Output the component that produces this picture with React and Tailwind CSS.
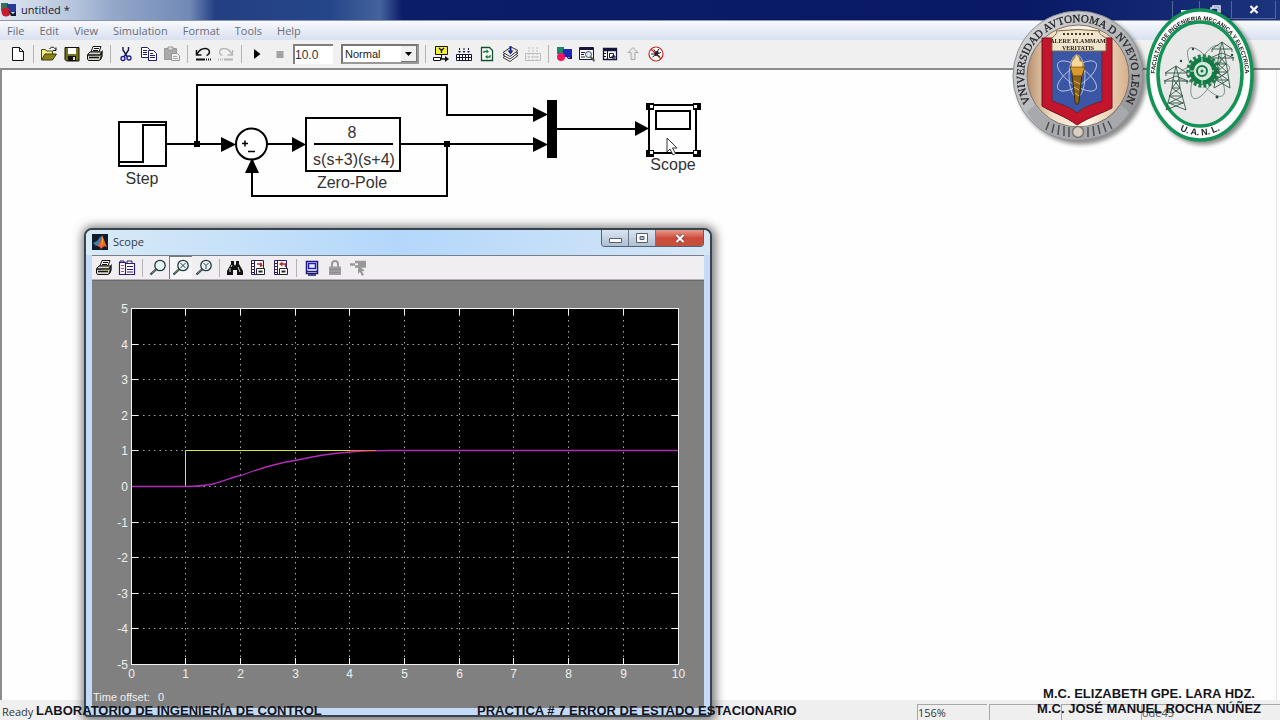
import React from "react";

const MENUS = ["File", "Edit", "View", "Simulation", "Format", "Tools", "Help"];

function Icon({ children }) {
  return (
    <svg viewBox="0 0 18 18" className="h-[18px] w-[18px] shrink-0" fill="none" aria-hidden="true">
      {children}
    </svg>
  );
}

function ToolButton({ label, pressed, children }) {
  return (
    <button
      type="button"
      aria-label={label}
      className={
        pressed
          ? "flex h-[23px] w-[23px] items-center justify-center border-t border-l border-[#777] bg-[#f7f6f8]"
          : "flex h-[23px] w-[23px] items-center justify-center"
      }
    >
      <Icon>{children}</Icon>
    </button>
  );
}

function Separator() {
  return (
    <div className="flex w-2 justify-center">
      <div className="h-[18px] w-px bg-[#b4b4b4]" />
    </div>
  );
}

const printer = (
  <>
    <path d="M5 7 7 1.500h8L13 7z" fill="#fff" stroke="#111" />
    <path d="M8 3.500h5M7 5.500h5" stroke="#111" />
    <path d="M1.500 9.500 4 7h12l-1 2.500v4.500l-2 1.500H2.500l-1-1.500z" fill="#d9d9d0" stroke="#111" />
    <path d="M2 10h12M3 12.500h10M14 10l2-3v4l-2 3.500" stroke="#111" strokeWidth="1.300" />
    <path d="M9 11.300h3" stroke="#b8b02a" />
  </>
);

const lens = (
  <>
    <circle cx="11" cy="6.500" r="5.200" fill="#e6f5f2" stroke="#223c44" strokeWidth="1.300" />
    <path d="M7.500 10 1.500 15.500" stroke="#223c44" strokeWidth="2.200" />
    <path d="M7 10.500 2.500 14.500" stroke="#a9c94a" strokeWidth="0.700" />
  </>
);

const axesNote = (
  <>
    <path d="M2.500 1.500h12v14h-12z" fill="#fff" stroke="#2a1c66" />
    <path d="M5.500 2v13M2.500 4.500h3M2.500 7.500h3M2.500 10.500h3M2.500 13.500h3" stroke="#2a1c66" />
    <path d="M7.500 9.500h8v6h-8z" fill="#fff" stroke="#222" />
    <path d="M9.500 12.500h4" stroke="#222" strokeWidth="2" />
  </>
);

function MainToolbar() {
  return (
    <div
      role="toolbar"
      aria-label="Model tools"
      className="flex h-[30px] shrink-0 items-center border-b-2 border-[#8c8c8c] bg-[#f0f0f0] pl-[6px]"
    >
      <ToolButton label="New">
        <path d="M3.500 2.500h7l4 4v9h-11z" fill="#fff" stroke="#111" />
        <path d="M10.500 2.500v4h4" stroke="#111" />
      </ToolButton>
      <Separator />
      <ToolButton label="Open">
        <path d="M1.500 14.500v-10h4l1 1.500h6v3" fill="#f4ee8b" stroke="#4b4810" />
        <path d="M1.500 15 5 9h11.500l-4 6z" fill="#8a8418" stroke="#3a380c" />
        <path d="M9.500 4c2-3 5-2 6 .5M16 2.500v3h-3" stroke="#111" />
      </ToolButton>
      <ToolButton label="Save">
        <path d="M2 2.500h14V16H3.500L2 14.500z" fill="#77701a" stroke="#111" />
        <path d="M5 3h8v6H5z" fill="#fff" />
        <path d="M5 11h8v5H5z" fill="#111" />
        <path d="M10 12h2v3h-2z" fill="#ddd" />
      </ToolButton>
      <ToolButton label="Print">{printer}</ToolButton>
      <Separator />
      <ToolButton label="Cut">
        <path d="M6 2v3l4.500 7M11.500 2v3L7 12" stroke="#15154a" strokeWidth="1.400" />
        <circle cx="6" cy="13.500" r="2" stroke="#1c1c9a" strokeWidth="1.300" />
        <circle cx="12" cy="13" r="2" stroke="#1c1c9a" strokeWidth="1.300" />
      </ToolButton>
      <ToolButton label="Copy">
        <path d="M1.500 2.500h6l2 2v8h-8z" fill="#fff" stroke="#20206a" />
        <path d="M3 5.500h4M3 7.500h4M3 9.500h4" stroke="#20206a" />
        <path d="M8.500 5.500h5l3 3v7h-8z" fill="#fff" stroke="#20206a" />
        <path d="M10 8.500h3M10 10.500h5M10 12.500h5" stroke="#20206a" />
      </ToolButton>
      <ToolButton label="Paste">
        <path d="M1.500 3.500h12v11h-12z" fill="#a9a9a9" stroke="#999" />
        <path d="M5 2h5v3H5z" fill="#ddd" stroke="#999" />
        <path d="M8.500 8.500h6l2 2v5h-8z" fill="#eee" stroke="#999" />
        <path d="M10 11.500h4M10 13.500h5" stroke="#aaa" />
      </ToolButton>
      <Separator />
      <ToolButton label="Undo">
        <path d="M2.500 5v5h5M3 9.500C5 5 8 3.500 11 3.500c5 0 6 5.500 1.500 7" stroke="#111" strokeWidth="1.500" />
        <path d="M2 14.500h9" stroke="#111" strokeWidth="2" />
        <path d="M12 14.500h5" stroke="#111" strokeWidth="2" strokeDasharray="1 1" />
      </ToolButton>
      <ToolButton label="Redo">
        <path d="M15.500 5v5h-5M15 9.500C13 5 10 3.500 7 3.500c-5 0-6 5.500-1.500 7" stroke="#b5b5b5" strokeWidth="1.300" />
        <path d="M7 14.500h9" stroke="#b5b5b5" strokeWidth="2" />
        <path d="M1 14.500h5" stroke="#b5b5b5" strokeWidth="2" strokeDasharray="1 1" />
      </ToolButton>
      <Separator />
      <ToolButton label="Start simulation">
        <path d="M6 4v10l6.500-5z" fill="#000" />
      </ToolButton>
      <ToolButton label="Stop simulation">
        <path d="M5.500 6h7v7h-7z" fill="#a2a2a2" />
      </ToolButton>
      <input
        aria-label="Stop time"
        defaultValue="10.0"
        className="ml-[2px] h-5 w-10 border-t-2 border-l-2 border-[#808080] bg-white font-['Liberation_Sans',Arial,sans-serif] text-[12px] text-[#333] outline-none"
      />
      <div className="relative ml-2 flex h-5 w-[78px]">
        <select
          aria-label="Simulation mode"
          className="h-5 w-full appearance-none border-2 border-[#777] border-r-[#999] border-b-[#999] bg-white pl-[2px] font-['Liberation_Sans',Arial,sans-serif] text-[11px] text-[#222] outline-none"
        >
          <option>Normal</option>
          <option>Accelerator</option>
        </select>
        <div className="pointer-events-none absolute top-[2px] right-[2px] flex h-4 w-4 items-center justify-center border-r border-b border-[#777] bg-[#f0f0f0]">
          <svg viewBox="0 0 7 4" className="h-1 w-[7px]" aria-hidden="true">
            <path d="M0 0h7L3.500 4z" fill="#000" />
          </svg>
        </div>
      </div>
      <div className="w-[2px]" />
      <Separator />
      <ToolButton label="Library link display">
        <path d="M3.500 1.500h12v8h-12z" fill="#f5f23c" stroke="#111" />
        <path d="m7 3 2.500 2.500L12 3M9.500 5.500V8" stroke="#111" strokeWidth="1.300" />
        <path d="M9.500 9.500V14" stroke="#111" />
        <path d="M1.500 12.500h7v3h-7z" fill="#fff" stroke="#111" />
        <path d="M9 14h6" stroke="#111" strokeWidth="1.500" />
        <path d="M13 11v6l4-3z" fill="#111" />
      </ToolButton>
      <ToolButton label="Incremental build">
        <path d="M1.500 9.500h15v6h-15z" fill="#fff" stroke="#15153a" />
        <path d="M1 12.500h16M4.500 9v6M7.500 9v6M10.500 9v6M13.500 9v6" stroke="#15153a" />
        <path d="M4.500 3v4M9 3v4M13.500 3v4" stroke="#15153a" strokeDasharray="2 1" />
        <path d="M3 6h3L4.500 8zM7.500 6h3L9 8zM12 6h3l-1.500 2z" fill="#15153a" />
      </ToolButton>
      <ToolButton label="Refresh model blocks">
        <path d="M3.500 2.500h8l3 3v10h-11z" fill="#fff" stroke="#174c2e" strokeWidth="1.300" />
        <path d="M6 8V6.500h3M12 10v2H9" stroke="#17803a" strokeWidth="1.300" />
        <path d="M8.500 4v4.500L11 6.500zM9.500 9.500V14L7 12z" fill="#17803a" />
      </ToolButton>
      <ToolButton label="Build subsystem">
        <path d="m2 12.500 7 4 8-6-7-3.500z" fill="#fff" stroke="#333" />
        <path d="m2 10 7 4 8-6-7-3.500z" fill="#fff" stroke="#333" />
        <path d="m2 7.500 7 4 8-6-7-3.500z" fill="#eee" stroke="#333" />
        <path d="M9.500 1v5" stroke="#1a2a8a" strokeWidth="2" />
        <path d="M6.500 5.500h6l-3 4z" fill="#1a2a8a" />
      </ToolButton>
      <ToolButton label="Build all">
        <path d="M1.500 8.500h15v7h-15z" stroke="#bcbcbc" />
        <path d="M1 12h16M5 8v7M9 8v7M13 8v7M5 2v5M9 2v5M13 2v5" stroke="#c0c0c0" strokeDasharray="2 1" />
      </ToolButton>
      <Separator />
      <ToolButton label="Library browser">
        <path d="M2 2h7v7H2z" fill="#18896c" />
        <path d="M8 4h9v8H8z" fill="#2127bc" />
        <circle cx="6" cy="12" r="4" fill="#ec1760" />
        <path d="m10 9 4 4 3-3v4h-4z" fill="#161662" />
      </ToolButton>
      <ToolButton label="Model explorer">
        <path d="M1.500 2.500h14v12h-14z" fill="#fff" stroke="#16163a" />
        <path d="M1 4h15" stroke="#16163a" strokeWidth="2" />
        <path d="M3 7.500h4M3 9.500h3M3 12h4" stroke="#16163a" />
        <circle cx="10.500" cy="9.500" r="3" fill="#d7edf1" stroke="#444" />
        <path d="m12.500 12 4 4" stroke="#555" strokeWidth="2" />
      </ToolButton>
      <ToolButton label="Model browser">
        <path d="M2.500 3.500h13v11h-13z" fill="#fff" stroke="#14143a" strokeWidth="1.300" />
        <path d="M2 5h14" stroke="#14143a" strokeWidth="2.500" />
        <path d="M6.500 6v8M3 8.500h2M3 11.500h2" stroke="#14143a" />
        <path d="M8.500 8.500h4v4h-4zM11 11h3v2h-3z" stroke="#14143a" />
      </ToolButton>
      <ToolButton label="Go to parent system">
        <path d="M9 2.500 4 7.500h3v7h4v-7h3z" fill="#e8e8e8" stroke="#aaa" />
      </ToolButton>
      <ToolButton label="Debug">
        <circle cx="9" cy="9" r="7" fill="#fff" stroke="#c92525" strokeWidth="1.200" />
        <path d="M4 4l10 10" stroke="#c92525" strokeWidth="1.200" />
        <ellipse cx="9.500" cy="8.500" rx="1.800" ry="2.600" fill="#222" transform="rotate(35 9.500 8.500)" />
        <path d="M4 9h4M5.500 12l3-2M14 7.500l-4 1.500M13 11.500l-3-1.500M7 4.500 8.500 7M11.500 4l-1 3" stroke="#222" />
      </ToolButton>
    </div>
  );
}

function Diagram() {
  return (
    <svg
      viewBox="0 0 740 150"
      className="absolute top-0 left-0 h-[150px] w-[740px]"
      role="img"
      aria-label="Block diagram"
      fontFamily="'Liberation Sans', Arial, sans-serif"
      fontSize="16"
      fill="none"
    >
      <g stroke="#000" strokeWidth="2">
        <path d="M166 74h56M197 74V15h250v30h88M267 74h26M400 74h135M447 74v52H252V98M557 59h80" />
        <path d="M119 52h47v44h-47z" fill="#fff" />
        <path d="M120 92h23V55h22" />
        <circle cx="251.500" cy="74" r="15.500" fill="#fff" />
        <path d="M306 48h94v53h-94zM314 74h79" />
        <path d="M242 73.500h6M245 70.500v6M248 81.500h7" strokeWidth="1.500" />
        <path d="M649 35h47v48h-47zM656 41h34v18h-34z" />
      </g>
      <g fill="#000">
        <path d="M221 67v15l15-7.500zM292 67v15l14-7.500zM533 37v15l15-7.500zM533 67v15l15-7.500zM635 51v15l14-7.500zM245 103h14l-7-15z" />
        <path d="M194 71h6v6h-6zM444 71h6v6h-6zM547 30h10v58h-10z" />
        <path d="M646 33h8v7h-8zM693 33h8v7h-8zM646 80h8v7h-8zM693 80h8v7h-8z" />
      </g>
      <path d="M650 35h3v3h-3zM694 35h3v3h-3zM650 81h3v3h-3zM694 81h3v3h-3z" fill="#fff" />
      <g fill="#333" textAnchor="middle">
        <text x="142" y="114">Step</text>
        <text x="352" y="68">8</text>
        <text x="354" y="95">s(s+3)(s+4)</text>
        <text x="352" y="118">Zero-Pole</text>
        <text x="673" y="100">Scope</text>
      </g>
      <path d="M667 68v14l3-3 3 6 2.500-1.500-3-5.500h4.500z" fill="#fff" stroke="#333" />
    </svg>
  );
}

const X0 = 39;
const X1 = 586;
const Y0 = 27;
const Y1 = 383;
const tickX = Array.from({ length: 11 }, (_, i) => Math.floor(X0 + ((X1 - X0) * i) / 10) + 0.5);
const tickY = Array.from({ length: 11 }, (_, i) => Math.round(Y0 + ((Y1 - Y0) * i) / 10) + 0.5);

function ScopePlot() {
  return (
    <svg
      viewBox="0 0 612 427"
      className="block h-[427px] w-full bg-[#808080]"
      role="img"
      aria-label="Scope plot"
      fontFamily="'Liberation Sans', Arial, sans-serif"
      fontSize="12"
      fill="none"
    >
      <rect x="39.500" y="27.500" width="547" height="356" fill="#000" />
      <g stroke="#a8a8a8" strokeDasharray="1.500 4">
        {tickX.slice(1, 10).map((x) => (
          <path key={x} d={`M${x} 28V383`} />
        ))}
        {tickY.slice(1, 10).map((y) => (
          <path key={y} d={`M40 ${y}H586`} />
        ))}
      </g>
      <g stroke="#f2f2f2">
        <rect x="39.500" y="27.500" width="547" height="356" />
        {tickX.slice(1, 10).map((x) => (
          <path key={x} d={`M${x} 28v6M${x} 383v-6`} />
        ))}
        {tickY.slice(1, 10).map((y) => (
          <path key={y} d={`M40 ${y}h6M586 ${y}h-6`} />
        ))}
      </g>
      <path d="M93.500 205.500v-36H284" stroke="#dfe83a" />
      <path
        d="M40 205.500H94Q109 205.500 121 203C133 200 141 195.500 149 194.500C162 190 175 184 203 179.500C230 173.500 245 172 258 171Q275 169.500 300 169.500H586"
        stroke="#b42cbc"
        strokeWidth="1.300"
      />
      <path d="M258 169.500h26" stroke="#f0762e" />
      <g fill="#f0f0f0">
        {tickX.map((x, i) => (
          <text key={i} x={x} y="397" textAnchor="middle">
            {i}
          </text>
        ))}
        {tickY.map((y, i) => (
          <text key={i} x="36" y={y + 4} textAnchor="end">
            {5 - i}
          </text>
        ))}
        <text x="1" y="420" fontSize="11">
          Time offset:
        </text>
        <text x="66" y="420" fontSize="11">
          0
        </text>
      </g>
    </svg>
  );
}

function ScopeWindow() {
  return (
    <section
      aria-label="Scope"
      className="absolute top-[228px] left-[84px] w-[628px] rounded-t-lg rounded-b-sm border-2 border-[#39434d] bg-[#c3dbf6] px-[6px] pb-[7px] shadow-[1px_1px_10px_3px_rgba(0,0,0,0.5)]"
    >
      <header className="-mx-[6px] flex h-[25px] items-start rounded-t-md bg-linear-to-r from-[#d8eaf6] via-[#b3d7fb] to-[#d6e6f5] pr-[6px] pl-[6px]">
        <svg viewBox="0 0 16 16" className="mt-1 h-4 w-4" aria-hidden="true">
          <path d="M0 0h16v16H0z" fill="#101b2b" />
          <path d="m1 9 4-2 3-4 2-1-3 9-3 1z" fill="#3b7fae" />
          <path d="M10 1c2 4 3 8 5 12-3-2-4 0-6 2-1-2-2-3-4-3 3-2 4-7 5-11z" fill="#ec662d" />
          <path d="M10 2c1 4 1 7-1 12 1-3 1-8 1-12z" fill="#f8c34c" />
        </svg>
        <h1 className="ml-[5px] flex-1 pt-1 text-[11px] leading-4 text-[#2c3b48]">Scope</h1>
        <div className="flex h-[17px] overflow-hidden rounded-b border border-t-0 border-[#526173]">
          <button
            type="button"
            aria-label="Minimize"
            className="flex w-[27px] items-center justify-center border-r border-[#6b7888] bg-linear-to-b from-[#dae5f1] to-[#aebfd3]"
          >
            <svg viewBox="0 0 13 5" className="mt-1 h-[5px] w-[13px]" aria-hidden="true">
              <path d="M.5.5h12v4H.5z" fill="#fff" stroke="#56606c" />
            </svg>
          </button>
          <button
            type="button"
            aria-label="Maximize"
            className="flex w-[27px] items-center justify-center border-r border-[#6b7888] bg-linear-to-b from-[#dae5f1] to-[#aebfd3]"
          >
            <svg viewBox="0 0 12 10" className="h-[10px] w-3" aria-hidden="true">
              <path d="M.5.5h11v9H.5z" fill="#fff" stroke="#56606c" />
              <path d="M4 3.500h4v3H4z" fill="#a9bbd0" stroke="#56606c" />
            </svg>
          </button>
          <button
            type="button"
            aria-label="Close"
            className="flex w-[47px] items-center justify-center bg-linear-to-b from-[#e59a8c] via-[#cf4a3b] to-[#c0513c]"
          >
            <svg viewBox="0 0 10 9" className="h-[9px] w-[10px]" fill="none" aria-hidden="true">
              <path d="m1.500 1 7 7M8.500 1l-7 7" stroke="#70382f" strokeWidth="3.500" />
              <path d="m1.500 1 7 7M8.500 1l-7 7" stroke="#fff" strokeWidth="2.200" />
            </svg>
          </button>
        </div>
      </header>
      <div
        role="toolbar"
        aria-label="Scope tools"
        className="flex h-[25px] items-center border-t border-b border-t-[#777f8a] border-b-[#b5b2b5] bg-[#f0eef0]"
      >
        <ToolButton label="Print scope">{printer}</ToolButton>
        <ToolButton label="Parameters">
          <path d="M1.500 3.500h6v12h-6zM7.500 4.500h9v11h-9z" fill="#fff" stroke="#2b1d77" strokeWidth="1.200" />
          <path d="M2 3V2h4v2M9 4V2h5v2" stroke="#2b1d77" />
          <path d="M3 6.500h3M3 9.500h3M3 12.500h3" stroke="#c64a6b" />
          <path d="M9 7.500h6M9 10.500h6M9 13h6" stroke="#2b1d77" />
        </ToolButton>
        <Separator />
        <ToolButton label="Zoom">{lens}</ToolButton>
        <ToolButton label="Zoom X axis" pressed>
          {lens}
          <path d="m8.500 4 5 5M13.500 4l-5 5" stroke="#33434a" />
        </ToolButton>
        <ToolButton label="Zoom Y axis">
          {lens}
          <path d="m8.500 4 2.500 2.500L13.500 4M11 6.500V10" stroke="#33434a" />
        </ToolButton>
        <Separator />
        <ToolButton label="Autoscale">
          <path d="M5 2h3v3l1 2 1-2V2h3v3l4 7v4h-6v-5H7v5H1v-4l4-7z" fill="#111" />
          <path d="M4 9v4M12 8l2 5M6 6l-1 2" stroke="#d8d8d8" />
        </ToolButton>
        <ToolButton label="Save axes settings">
          {axesNote}
          <path d="M8 5h5" stroke="#b02b2b" strokeWidth="1.500" />
          <path d="M11 3v5l3-1z" fill="#b02b2b" />
        </ToolButton>
        <ToolButton label="Restore axes settings">
          {axesNote}
          <path d="M9 5h4.500v3" stroke="#b02b2b" strokeWidth="1.500" />
          <path d="M7 5l3.500-2.500v5z" fill="#b02b2b" />
        </ToolButton>
        <Separator />
        <ToolButton label="Floating scope">
          <path d="M3.500 2.500h11v12h-11z" fill="#fff" stroke="#1d1a78" strokeWidth="1.500" />
          <path d="M5.500 4.500h7v5h-7z" fill="#e8ecff" stroke="#201cc0" strokeWidth="1.500" />
          <path d="M3 12.500h12M5 16h8" stroke="#1d1a78" strokeWidth="1.500" />
        </ToolButton>
        <ToolButton label="Lock axes">
          <path d="M6 8V5c0-4 6-4 6 0v3" stroke="#999" strokeWidth="2" />
          <path d="M3 7.500h12V16H3z" fill="#9d9d9d" />
          <path d="M4 10.500h10M4 13.500h10" stroke="#8d8d8d" />
        </ToolButton>
        <ToolButton label="Signal selection">
          <path d="M1 5.500h5M6 3h11M6 7.500h11M9 5h8" stroke="#999" strokeWidth="2.500" />
          <path d="M9 6v9l2-2 2 4 2-1-2-4h3z" fill="#999" />
        </ToolButton>
      </div>
      <div className="border-t border-[#6b6b6b]">
        <ScopePlot />
      </div>
    </section>
  );
}

function Logos() {
  return (
    <svg
      viewBox="0 0 256 148"
      className="absolute top-0 right-[16px] h-[148px] w-64 drop-shadow-[3px_3px_2px_rgba(0,0,0,0.45)]"
      role="img"
      aria-label="University and faculty seals"
      fill="none"
    >
      <defs>
        <path id="sealArc" d="M28 110A54 54 0 1 1 112 110" />
        <path id="facultyArc" d="M148 88A45 56 0 1 1 236 88" />
        <path id="facultyBase" d="M159 121Q192 150 225 121" />
        <linearGradient id="metal" x1="0" y1="0" x2="1" y2="1">
          <stop offset="0" stopColor="#dcdcdc" />
          <stop offset="0.500" stopColor="#b5b7ba" />
          <stop offset="1" stopColor="#858789" />
        </linearGradient>
        <linearGradient id="sand">
          <stop offset="0" stopColor="#b78f6b" />
          <stop offset="0.250" stopColor="#f3dfc6" />
          <stop offset="0.600" stopColor="#fff6e6" />
          <stop offset="1" stopColor="#d6ae8a" />
        </linearGradient>
      </defs>
      <circle cx="70" cy="76" r="65" fill="url(#metal)" stroke="#8b8d90" />
      <circle cx="70" cy="76" r="51" fill="url(#sand)" stroke="#7e756c" />
      <path d="M27 105c10 16 26 22 43 22s33-6 43-22l8 7c-12 20-30 27-51 27s-39-7-51-27z" fill="#a7a9ac" />
      <path d="M41 122l-3 8M46 124l-2 9M51 125l-1 10M56 126v10M61 127v10M80 127v10M85 126l1 10M90 125l2 9M95 123l3 9M100 121l4 8" stroke="#4c4e51" strokeWidth="1.500" />
      <circle cx="70" cy="132" r="5.500" fill="#d8cfc6" stroke="#7d7670" strokeWidth="1.500" />
      <path d="M34 38h70v70c-9 5-23 9-35 17-12-9-26-13-35-19z" fill="#c3152c" stroke="#6f1320" />
      <path d="M44 40h50v61c-8 3-17 5-25 12-8-7-18-9-25-12z" fill="#3a56a5" stroke="#74202f" />
      <path d="M44 38q7-6 4-7 22-3 44 0-4 1 6 7v13H44z" fill="#efe5cd" stroke="#7c6a4c" />
      <path d="M55 34h30" stroke="#4a3a2a" strokeWidth="2" strokeDasharray="2 2" />
      <g fontFamily="'Liberation Serif', serif" fontWeight="700" fill="#2a1d18" textAnchor="middle">
        <text x="70" y="43" fontSize="6">ALERE FLAMMAM</text>
        <text x="70" y="50" fontSize="6">VERITATIS</text>
      </g>
      <g stroke="#b9c6e6" strokeWidth="0.900">
        <ellipse cx="69" cy="76" rx="23" ry="9" transform="rotate(35 69 76)" />
        <ellipse cx="69" cy="76" rx="23" ry="9" transform="rotate(-35 69 76)" />
        <ellipse cx="69" cy="76" rx="8" ry="21" />
      </g>
      <path d="M64 74h10l-3 28q-2 5-4 0z" fill="#8a6218" stroke="#3d2b10" />
      <path d="M66 81l6 3M66 87l5 3M67 93l4 3" stroke="#e2b953" />
      <path d="M62 67h15l-3 9H65z" fill="#d79a2c" stroke="#6b4312" />
      <path d="M64 67c-3-6 3-7 4-13 3 3 4 4 4 7 3-1 4 4 2 6z" fill="#f3d99a" stroke="#c17f26" />
      <text fontFamily="'Liberation Serif', serif" fontSize="11" fill="#25262a" stroke="#25262a" strokeWidth="0.300">
        <textPath href="#sealArc" startOffset="50%" textAnchor="middle">
          VNIVERSIDAD AVTONOMA D NVEVO LEON
        </textPath>
      </text>

      <ellipse cx="192" cy="75" rx="52" ry="65" fill="#fff" stroke="#149357" strokeWidth="3.500" />
      <ellipse cx="192" cy="74" rx="42" ry="52" fill="#e7e8e7" stroke="#149357" strokeWidth="3.500" />
      <g fontFamily="'Liberation Sans', Arial, sans-serif" fontWeight="700" fill="#202322">
        <text fontSize="6">
          <textPath href="#facultyArc" startOffset="50%" textAnchor="middle">
            FACULTAD DE INGENIERIA MECANICA Y ELECTRICA
          </textPath>
        </text>
        <text fontSize="9">
          <textPath href="#facultyBase" startOffset="50%" textAnchor="middle">
            U. A. N. L.
          </textPath>
        </text>
      </g>
      <g transform="translate(8 0)">
        <g stroke="#5a7f6d" strokeWidth="0.700">
          <ellipse cx="190" cy="72" rx="10" ry="29" transform="rotate(25 190 72)" />
          <ellipse cx="190" cy="72" rx="10" ry="29" transform="rotate(-35 190 72)" />
          <ellipse cx="188" cy="72" rx="26" ry="9" transform="rotate(-10 188 72)" />
        </g>
        <g fill="#27483a">
          <circle cx="165" cy="61" r="1.200" />
          <circle cx="201" cy="97" r="1.500" />
          <circle cx="216" cy="55" r="1.200" />
          <circle cx="177" cy="49" r="1.200" />
        </g>
        <circle cx="187" cy="71" r="15" stroke="#23804e" strokeWidth="3.500" strokeDasharray="3 2" />
        <circle cx="187" cy="71" r="11.500" fill="#d7e9de" stroke="#117a45" strokeWidth="4.500" />
        <circle cx="186" cy="71" r="5" stroke="#117a45" strokeWidth="2" />
        <circle cx="186" cy="71" r="1.500" fill="#117a45" />
        <path d="M186 58v6M186 78v6M174 71h6M192 71h6" stroke="#d7e9de" />
        <g stroke="#2f5a45" strokeWidth="0.900">
          <path d="M160 66l-3 13-1 9-6 22M160 66l3 13 1 9 6 22M149 73l11-7 11 7zM148 81l12-5 12 5zM150 73v3M171 73v3M149 81v3M171 81v3M157 79l7 9-11 8 14 7-17 7M163 79l-7 9 11 8-14 7 17 7M156 88h8M154 96h12M152 103h16" />
          <path d="M206 42l-3 12-5 34M206 42l3 12 5 34M196 49l10-7 10 7zM194 58l12-5 12 5zM196 49v3M216 49v3M195 58v3M217 58v3M203 56l7 8-9 8 11 8-14 8M209 56l-7 8 9 8-11 8 14 8M202 64h8M201 72h10M199 80h14" />
        </g>
      </g>
    </svg>
  );
}

export default function App() {
  return (
    <div className="relative flex h-screen flex-col overflow-hidden bg-white font-['Open_Sans','Noto_Sans',sans-serif]">
      <header className="flex h-5 shrink-0 items-center bg-[linear-gradient(90deg,#dfe6ef_0,#b4c4dc_75px,#95a9ca_110px,#7089b5_190px,#243f84_215px,#25468a_330px,#44639c_380px,#0b1c68_402px,#091965_80%,#1c347c_100%)]">
        <svg viewBox="0 0 16 16" className="h-4 w-4" aria-hidden="true">
          <path d="M1 1h7v8H1z" fill="#33735b" />
          <path d="M7 2h9v8H7z" fill="#233c9c" />
          <circle cx="6" cy="10" r="4.500" fill="#c51d2d" />
          <path d="m8 8 5 4 3-3v5h-5z" fill="#151b35" />
        </svg>
        <span className="ml-[5px] flex-1 text-[11px] text-[#18202c]">untitled *</span>
        <div className="flex">
          <button type="button" aria-label="Minimize model" className="flex h-[18px] w-7 items-center justify-center border border-t-0 border-[#51679b]">
            <span className="mt-1 h-[3px] w-[10px] bg-[#e8edf5]" />
          </button>
          <button type="button" aria-label="Restore model" className="flex h-[18px] w-8 items-center justify-center border-r border-b border-[#51679b]">
            <svg viewBox="0 0 11 10" className="h-[10px] w-[11px]" fill="none" aria-hidden="true">
              <path d="M3 3V1h7v6H8M1 3h7v6H1z" stroke="#e8edf5" strokeWidth="1.500" />
            </svg>
          </button>
          <button type="button" aria-label="Close model" className="mr-1 flex h-[18px] w-11 items-center justify-center border-r border-b border-[#51679b]">
            <svg viewBox="0 0 10 9" className="h-[9px] w-[10px]" fill="none" aria-hidden="true">
              <path d="m1.500 1 7 7M8.500 1l-7 7" stroke="#f2f4f8" strokeWidth="2.300" />
            </svg>
          </button>
        </div>
      </header>
      <nav
        aria-label="Menu bar"
        className="flex h-5 shrink-0 items-center gap-[15px] border-t border-[#8c96ab] bg-linear-to-b from-[#f8f9fc] to-[#d9e0f0] pl-[7px]"
      >
        {MENUS.map((name) => (
          <button key={name} type="button" className="text-[11px] leading-4 text-[#696e78]">
            {name}
          </button>
        ))}
      </nav>
      <MainToolbar />
      <main className="relative mr-[3px] flex-1 border-r border-l-2 border-r-[#e4e4e4] border-l-[#8c8c8c] bg-[#fefefe]">
        <div className="-ml-[2px] h-full">
          <div className="relative h-full">
            <Diagram />
          </div>
        </div>
      </main>
      <footer className="flex h-5 shrink-0 items-end bg-[#efefef] text-[11px] leading-4 text-[#333]">
        <span className="flex-1 pl-[2px]">Ready</span>
        <span className="h-4 w-[70px] border-t border-l border-[#a8a8a8]">156%</span>
        <span className="ml-[2px] h-4 w-[70px] border-t border-l border-[#a8a8a8]" />
        <span className="ml-[2px] h-4 w-[78px] border-t border-l border-[#a8a8a8]" />
        <span className="ml-[2px] h-4 w-[139px] border-t border-l border-[#a8a8a8] text-[#555]">ode45</span>
      </footer>
      <ScopeWindow />
      <Logos />
      <div className="pointer-events-none absolute inset-x-0 bottom-[2px] flex items-end pr-[19px] pl-9 font-['Liberation_Sans',Arial,sans-serif] text-[13px] leading-[15px] font-bold whitespace-nowrap text-[#14141c]">
        <p className="w-[441px]">LABORATORIO DE INGENIERÍA DE CONTROL</p>
        <p>PRACTICA # 7 ERROR DE ESTADO ESTACIONARIO</p>
        <p className="ml-auto pb-[2px] text-center">
          M.C. ELIZABETH GPE. LARA HDZ.
          <br />
          M.C. JOSÉ MANUEL ROCHA NÚÑEZ
        </p>
      </div>
    </div>
  );
}
